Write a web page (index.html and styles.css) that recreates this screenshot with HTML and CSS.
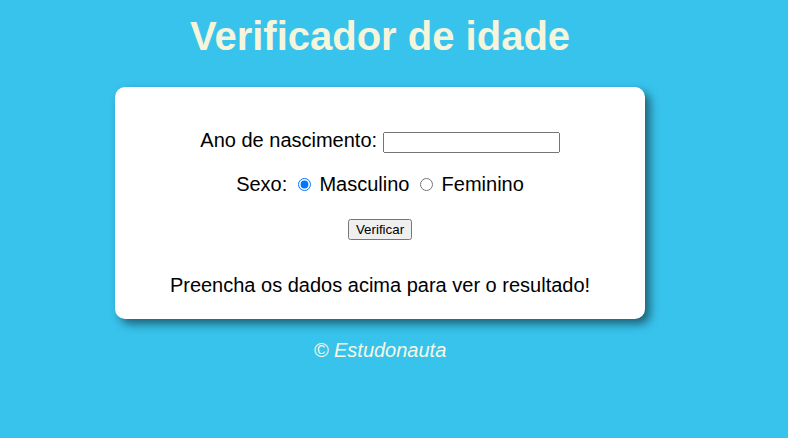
FILE: index.html
```html
<!DOCTYPE html>
<html lang="pt-br">
<head>
<meta charset="UTF-8">
<title>Verificador de idade</title>
<link rel="stylesheet" href="styles.css">
</head>
<body>
<div class="page">
  <header class="header">
    <h1 class="title">Verificador de idade</h1>
  </header>
  <section class="card">
    <div class="form">
      <p class="row">Ano de nascimento: <input type="text" class="txt" id="txtano"></p>
      <p class="row">Sexo: <input type="radio" name="radsex" id="mas" checked> <label for="mas">Masculino</label> <input type="radio" name="radsex" id="fem"> <label for="fem">Feminino</label></p>
      <p class="row"><input type="button" class="btn" value="Verificar"></p>
    </div>
    <div class="res">Preencha os dados acima para ver o resultado!</div>
  </section>
  <footer class="footer">
    <p class="copy">&copy; Estudonauta</p>
  </footer>
</div>
</body>
</html>
```
FILE: styles.css
```css
html, body {
  margin: 0;
  padding: 0;
}
body {
  background-color: #38c3ec;
  font: normal 20px "Liberation Sans", Arial, sans-serif;
}
.page {
  width: 760px;
  padding-top: 1px;
}
.header {
  color: #f5f5dc;
  text-align: center;
}
.title {
  font-size: 40px;
  font-weight: bold;
  line-height: 46px;
  margin: 12px 0 28px;
}
.card {
  width: 500px;
  margin: 0 auto;
  padding: 42px 15px 22px;
  background: #ffffff;
  border-radius: 10px;
  box-shadow: 5px 5px 10px rgba(0, 0, 0, 0.5);
  text-align: center;
  color: #000;
}
.row {
  margin: 0 0 20px;
  line-height: 23px;
}
.row:last-child {
  margin-bottom: 0;
}
.txt {
  box-sizing: border-box;
  width: 177px;
  height: 21px;
}
.res {
  margin-top: 34px;
  line-height: 23px;
}
.footer {
  color: #f7f7e4;
  text-align: center;
  font-style: italic;
}
.copy {
  margin: 20px 0;
}
```
